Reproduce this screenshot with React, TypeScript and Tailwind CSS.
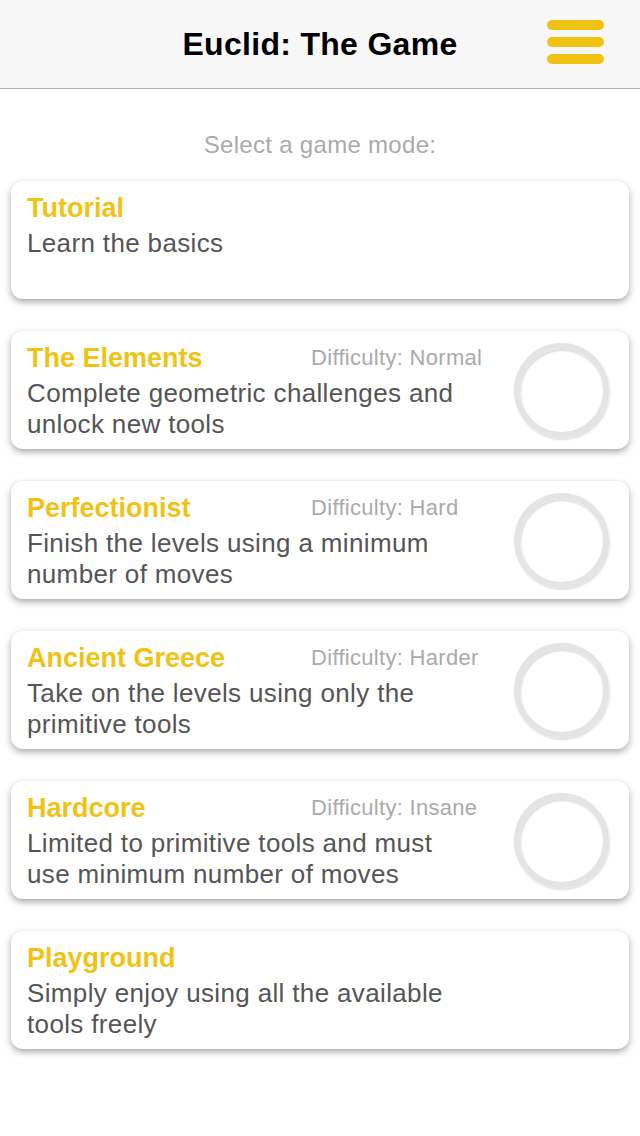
import React from "react";

// game modes shown on the menu
const modes = [
  { name: "Tutorial", desc: "Learn the basics", difficulty: "", ring: false },
  {
    name: "The Elements",
    desc: "Complete geometric challenges and unlock new tools",
    difficulty: "Difficulty: Normal",
    ring: true,
  },
  {
    name: "Perfectionist",
    desc: "Finish the levels using a minimum number of moves",
    difficulty: "Difficulty: Hard",
    ring: true,
  },
  {
    name: "Ancient Greece",
    desc: "Take on the levels using only the primitive tools",
    difficulty: "Difficulty: Harder",
    ring: true,
  },
  {
    name: "Hardcore",
    desc: "Limited to primitive tools and must use minimum number of moves",
    difficulty: "Difficulty: Insane",
    ring: true,
  },
  {
    name: "Playground",
    desc: "Simply enjoy using all the available tools freely",
    difficulty: "",
    ring: false,
  },
];

export default function App() {
  return (
    <div className="min-h-[1136px] w-[640px] bg-white font-['Liberation_Sans',Arial,sans-serif]">
      <header className="relative flex h-[89px] items-center justify-center border-b border-[#b2b2b2] bg-[#f7f7f7]">
        <h1 className="text-[32px] font-bold leading-none tracking-[0.3px] text-black">Euclid: The Game</h1>
        <button className="absolute right-[36px] top-[20px] flex flex-col gap-[7px]" aria-label="Menu">
          <span className="block h-[10px] w-[57px] rounded-full bg-[#efc214]" />
          <span className="block h-[10px] w-[57px] rounded-full bg-[#efc214]" />
          <span className="block h-[10px] w-[57px] rounded-full bg-[#efc214]" />
        </button>
      </header>

      <p className="mt-[42px] text-center text-[24px] leading-[28px] tracking-[0.3px] text-[#aaaaaa]">
        Select a game mode:
      </p>

      <div className="mt-[22px] flex flex-col gap-[32px] px-[11px]">
        {modes.map((m) => (
          <div
            key={m.name}
            className="flex h-[118px] items-center rounded-[12px] bg-white shadow-[0_3px_7px_rgba(0,0,0,0.35)]"
          >
            <div className="h-full w-[462px] shrink-0 pl-[16px] pt-[12px]">
              <div className="flex items-center">
                <span className="w-[284px] shrink-0 whitespace-nowrap text-[27px] font-bold leading-[30px] text-[#efc214]">
                  {m.name}
                </span>
                {m.difficulty && (
                  <span className="whitespace-nowrap text-[22px] leading-[28px] tracking-[0.3px] text-[#aaaaaa]">
                    {m.difficulty}
                  </span>
                )}
              </div>
              <p className="mt-[5px] text-[26px] leading-[31px] tracking-[0.35px] text-[#555555]">{m.desc}</p>
            </div>
            {m.ring && (
              <div className="ml-auto mr-[20px] h-[95px] w-[95px] rounded-full border-[6px] border-[#e4e4e4] shadow-[1px_2px_2px_rgba(0,0,0,0.12),inset_1px_2px_2px_rgba(0,0,0,0.14)]" />
            )}
          </div>
        ))}
      </div>
    </div>
  );
}
